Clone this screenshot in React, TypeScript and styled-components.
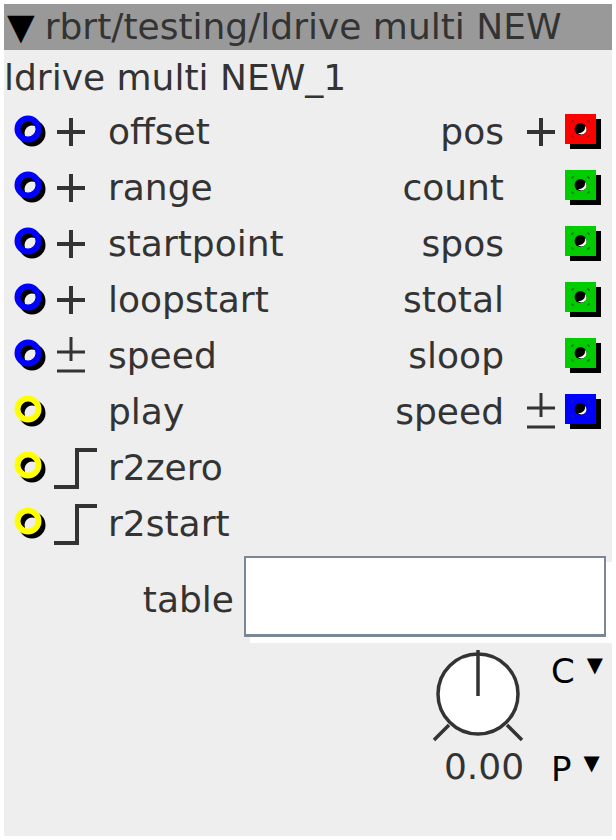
import React from "react";
import styled, { createGlobalStyle } from "styled-components";

const Global = createGlobalStyle`
  html, body { margin: 0; padding: 0; background: #ffffff; }
  body { font-family: "DejaVu Sans", "Liberation Sans", sans-serif; }
  * { box-sizing: border-box; }
`;

const Panel = styled.div`
  margin: 4px;
  width: 608px;
  height: 832px;
  background: #eeeeee;
  display: flex;
  flex-direction: column;
  color: #333333;
  font-size: 36px;
`;

const Header = styled.div`
  height: 46px;
  line-height: 46px;
  background: #999999;
  padding-left: 3px;
  white-space: nowrap;
  color: #333333;
`;

const Caret = styled.span`
  color: #000000;
  margin-right: 10px;
`;

const Title = styled.div`
  height: 54px;
  line-height: 56px;
  padding-left: 0px;
  white-space: nowrap;
`;

const Ports = styled.div`
  display: grid;
  grid-template-columns: 1fr auto;
`;

const Column = styled.div`
  display: flex;
  flex-direction: column;
`;

const InRow = styled.div`
  height: 56px;
  display: flex;
  align-items: center;
  padding-left: 10px;
`;

const OutRow = styled.div`
  height: 56px;
  display: flex;
  align-items: center;
  justify-content: flex-end;
  padding-right: 11px;
`;

const Label = styled.span<{ $gapL?: number; $gapR?: number }>`
  line-height: 56px;
  white-space: nowrap;
  margin-left: ${(p) => p.$gapL ?? 0}px;
  margin-right: ${(p) => p.$gapR ?? 0}px;
`;

const IconBox = styled.span<{ $ml: number }>`
  width: 30px;
  height: 44px;
  margin-left: ${(p) => p.$ml}px;
  display: flex;
  align-items: center;
  justify-content: flex-start;
  overflow: visible;
  flex: none;
`;

const TableRow = styled.div`
  display: flex;
  align-items: center;
  justify-content: flex-end;
  margin-top: 4px;
  padding-right: 6px;
`;

const TableLabel = styled.span`
  margin-right: 10px;
  margin-top: 6px;
`;

const TableInput = styled.div`
  width: 362px;
  height: 81px;
  background: #ffffff;
  border: 2px solid #7a8794;
  border-bottom-width: 3px;
  box-shadow: 6px 6px 0 #ffffff;
`;

const Controls = styled.div`
  display: flex;
  justify-content: flex-end;
  margin-top: 12px;
  padding-right: 9px;
`;

const KnobColumn = styled.div`
  display: flex;
  flex-direction: column;
  align-items: center;
  width: 96px;
`;

const KnobValue = styled.div`
  line-height: 40px;
  margin-top: 2px;
  margin-left: 12px;
  white-space: nowrap;
`;

const ModeColumn = styled.div`
  display: flex;
  flex-direction: column;
  justify-content: space-between;
  margin-left: 25px;
  height: 140px;
  padding-top: 2px;
  width: 52px;
`;

const Mode = styled.div`
  color: #000000;
  font-size: 34px;
  line-height: 40px;
  white-space: nowrap;
  display: flex;
  align-items: flex-start;
`;

const SmallCaret = styled.span`
  font-size: 21px;
  line-height: 20px;
  margin-left: 12px;
  margin-top: 4px;
`;

const Inlet = ({ color }: { color: string }) => (
  <svg width="34" height="36" viewBox="0 0 34 36" style={{ flex: "none" }}>
    <circle cx="18" cy="19" r="10.5" fill="none" stroke="#000" strokeWidth="6" />
    <circle cx="14" cy="15" r="10.5" fill="none" stroke={color} strokeWidth="6" />
  </svg>
);

const Outlet = ({ color }: { color: string }) => (
  <svg width="36" height="36" viewBox="0 0 36 36" style={{ flex: "none", marginLeft: 9 }}>
    <rect x="5" y="5" width="31" height="30" fill="#000" />
    <rect x="0" y="0" width="31" height="30" fill={color} />
    <g stroke="#333" strokeWidth="1" fill="none" opacity="0.7">
      <path d="M7 9 V7 H9" />
      <path d="M22 7 H24 V9" />
      <path d="M7 21 V23 H9" />
      <path d="M22 23 H24 V21" />
    </g>
    <circle cx="15.5" cy="15" r="6" fill="#000" />
    <path d="M13 19 A4.5 4.5 0 0 0 20 12 A6 6 0 0 1 13 19 Z" fill="#fff" />
  </svg>
);

const Plus = () => (
  <svg width="30" height="34" viewBox="0 0 30 34" style={{ flex: "none" }}>
    <path d="M1 17 H29 M15 3 V31" stroke="#333" strokeWidth="4" fill="none" />
  </svg>
);

const PlusMinus = () => (
  <svg width="30" height="40" viewBox="0 0 30 40" style={{ flex: "none" }}>
    <path d="M1 16 H29 M15 1 V25 M1 35 H29" stroke="#333" strokeWidth="3" fill="none" />
  </svg>
);

const Step = () => (
  <svg width="44" height="44" viewBox="0 0 44 44" style={{ flex: "none", marginLeft: -2 }}>
    <path d="M0 41 H23 V4 H43" stroke="#333" strokeWidth="4" fill="none" />
  </svg>
);

const Knob = () => (
  <svg width="96" height="96" viewBox="0 0 96 96">
    <circle cx="48" cy="45" r="40" fill="#ffffff" stroke="#333" strokeWidth="3.5" />
    <path d="M48 47 V1" stroke="#333" strokeWidth="3.5" />
    <path d="M19 76 L4 91 M77 76 L92 91" stroke="#333" strokeWidth="3.5" />
  </svg>
);

type Kind = "plus" | "pm" | "step" | "none";

const icon = (k: Kind) =>
  k === "plus" ? <Plus /> : k === "pm" ? <PlusMinus /> : k === "step" ? <Step /> : null;

const inlets: { label: string; color: string; kind: Kind }[] = [
  { label: "offset", color: "#0000ff", kind: "plus" },
  { label: "range", color: "#0000ff", kind: "plus" },
  { label: "startpoint", color: "#0000ff", kind: "plus" },
  { label: "loopstart", color: "#0000ff", kind: "plus" },
  { label: "speed", color: "#0000ff", kind: "pm" },
  { label: "play", color: "#ffff00", kind: "none" },
  { label: "r2zero", color: "#ffff00", kind: "step" },
  { label: "r2start", color: "#ffff00", kind: "step" },
];

const outlets: { label: string; color: string; kind: Kind }[] = [
  { label: "pos", color: "#ff0000", kind: "plus" },
  { label: "count", color: "#00cc00", kind: "none" },
  { label: "spos", color: "#00cc00", kind: "none" },
  { label: "stotal", color: "#00cc00", kind: "none" },
  { label: "sloop", color: "#00cc00", kind: "none" },
  { label: "speed", color: "#0000ff", kind: "pm" },
];

export default function App() {
  return (
    <>
      <Global />
      <Panel>
        <Header>
          <Caret>▼</Caret>rbrt/testing/ldrive multi NEW
        </Header>
        <Title>ldrive multi NEW_1</Title>
        <Ports>
          <Column>
            {inlets.map((r) => (
              <InRow key={r.label}>
                <Inlet color={r.color} />
                <IconBox $ml={8}>{icon(r.kind)}</IconBox>
                <Label $gapL={22}>{r.label}</Label>
              </InRow>
            ))}
          </Column>
          <Column>
            {outlets.map((r) => (
              <OutRow key={r.label}>
                <Label $gapR={22}>{r.label}</Label>
                <IconBox $ml={0}>{icon(r.kind)}</IconBox>
                <Outlet color={r.color} />
              </OutRow>
            ))}
          </Column>
        </Ports>
        <TableRow>
          <TableLabel>table</TableLabel>
          <TableInput />
        </TableRow>
        <Controls>
          <KnobColumn>
            <Knob />
            <KnobValue>0.00</KnobValue>
          </KnobColumn>
          <ModeColumn>
            <Mode>
              C<SmallCaret>▼</SmallCaret>
            </Mode>
            <Mode>
              P<SmallCaret>▼</SmallCaret>
            </Mode>
          </ModeColumn>
        </Controls>
      </Panel>
    </>
  );
}
